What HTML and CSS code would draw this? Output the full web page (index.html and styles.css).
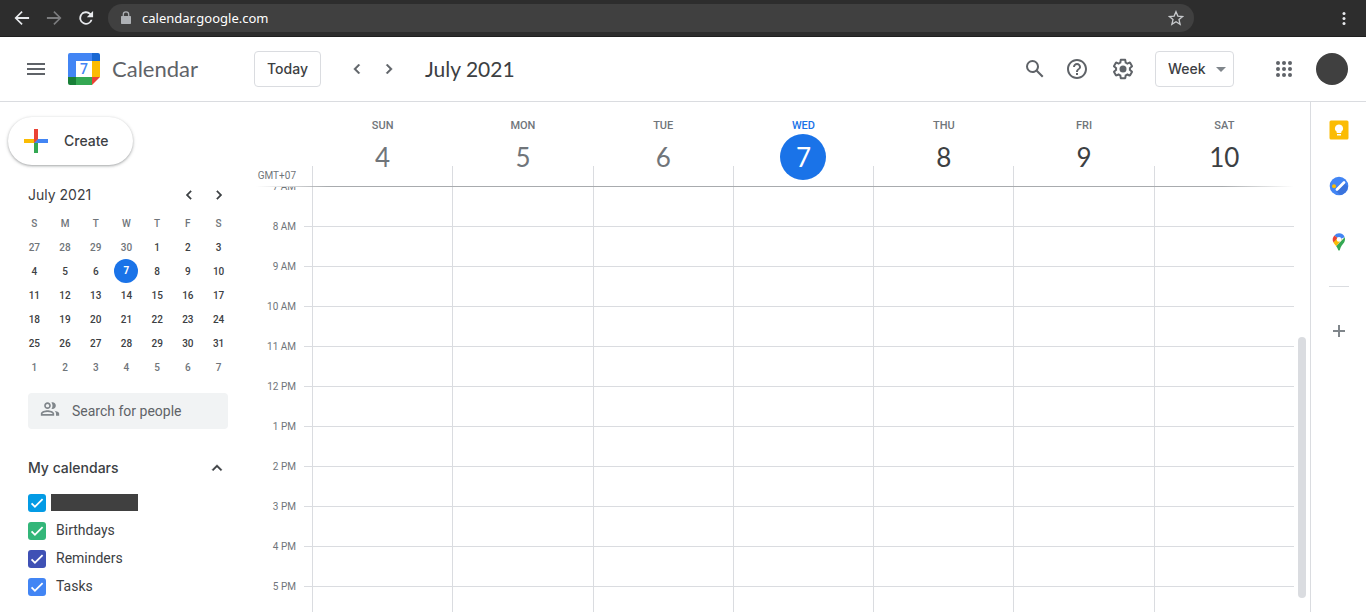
FILE: index.html
```html
<!DOCTYPE html>
<html lang="en">
<head>
<meta charset="utf-8">
<meta name="viewport" content="width=device-width, initial-scale=1">
<title>Calendar - July 2021</title>
<link rel="stylesheet" href="styles.css">
</head>
<body>
<div class="browser">
  <button class="browser-btn" aria-label="Back"><svg width="20" height="20" viewBox="0 0 24 24"><path d="M20.500 10.900H6.900l5.900-5.900L11.400 3.600 3 12l8.400 8.400 1.400-1.400-5.900-5.900h13.600z" fill="#e8eaed"/></svg></button>
  <button class="browser-btn" aria-label="Forward"><svg width="20" height="20" viewBox="0 0 24 24"><path d="M3.500 10.900h13.600l-5.900-5.900 1.400-1.400L21 12l-8.400 8.400-1.400-1.400 5.900-5.900H3.500z" fill="#7b7c7e"/></svg></button>
  <button class="browser-btn" aria-label="Reload"><svg width="20" height="20" viewBox="0 0 24 24"><path d="M17.650 6.350A8 8 0 1 0 19.730 14h-2.300A5.800 5.800 0 1 1 12 6.200c1.600 0 3 .7 4.100 1.700L13 11h7.500V3.500z" fill="#e8eaed"/></svg></button>
  <div class="address">
    <svg width="16" height="16" viewBox="0 0 24 24"><path d="M18 9h-1V7A5 5 0 0 0 7 7v2H6c-1.100 0-1.500.700-1.500 1.500v9c0 .800.400 1.500 1.500 1.500h12c1.100 0 1.500-.700 1.500-1.500v-9C19.500 9.700 19.100 9 18 9zM8.800 7a3.200 3.200 0 0 1 6.400 0v2H8.800z" fill="#aeb1b5"/></svg>
    <input class="address-input" aria-label="Address" value="calendar.google.com">
    <button class="browser-btn star" aria-label="Bookmark"><svg width="16" height="16" viewBox="0 0 24 24"><path d="M12 2.500l2.800 6.600 7.200.600-5.500 4.700 1.700 7L12 17.700l-6.200 3.700 1.700-7L2 9.700l7.200-.600z" fill="none" stroke="#c8cacd" stroke-width="2"/></svg></button>
  </div>
  <button class="browser-btn more" aria-label="Menu"><svg width="16" height="16" viewBox="0 0 16 16" fill="#e8eaed"><circle cx="8" cy="3.500" r="1.500"/><circle cx="8" cy="8.500" r="1.500"/><circle cx="8" cy="13.500" r="1.500"/></svg></button>
</div>

<header class="topbar">
  <button class="icon-btn menu" aria-label="Main menu"><svg width="24" height="24" viewBox="0 0 24 24"><path d="M3 18h18v-2H3zm0-5h18v-2H3zm0-7v2h18V6z" fill="#5f6368"/></svg></button>
  <div class="brand">
    <svg class="logo" width="32" height="32" viewBox="0 0 32 32">
      <path d="M2 0h22v8H8v16H0V2a2 2 0 0 1 2-2z" fill="#4285f4"/>
      <path d="M24 0h6a2 2 0 0 1 2 2v6h-8z" fill="#1967d2"/>
      <path d="M24 8h8v16h-8z" fill="#fbbc04"/>
      <path d="M8 24h16v8H8z" fill="#34a853"/>
      <path d="M0 24h8v8H2a2 2 0 0 1-2-2z" fill="#188038"/>
      <path d="M24 24h8l-8 8z" fill="#ea4335"/>
      <path d="M8 8h16v16H8z" fill="#fff"/>
      <text x="16" y="21" class="logo-day">7</text>
    </svg>
    <span class="brand-name">Calendar</span>
  </div>
  <button class="outline-btn">Today</button>
  <div class="pager">
    <button class="icon-btn" aria-label="Previous week"><svg width="20" height="20" viewBox="0 0 24 24"><path d="M15.410 7.410L14 6l-6 6 6 6 1.410-1.410L10.830 12z" fill="#5f6368" stroke="#5f6368" stroke-width=".5"/></svg></button>
    <button class="icon-btn" aria-label="Next week"><svg width="20" height="20" viewBox="0 0 24 24"><path d="M10 6L8.590 7.410 13.170 12l-4.580 4.590L10 18l6-6z" fill="#5f6368" stroke="#5f6368" stroke-width=".5"/></svg></button>
  </div>
  <h1 class="period">July 2021</h1>
  <div class="tools">
    <button class="icon-btn" aria-label="Search"><svg width="24" height="24" viewBox="0 0 24 24"><path d="M20.490 19l-5.730-5.730C15.530 12.200 16 10.910 16 9.500A6.500 6.500 0 1 0 9.500 16c1.410 0 2.700-.470 3.770-1.240L19 20.490 20.490 19zM5 9.500C5 7.010 7.010 5 9.500 5S14 7.010 14 9.500 11.990 14 9.500 14 5 11.990 5 9.500z" fill="#5f6368"/></svg></button>
    <button class="icon-btn" aria-label="Support"><svg width="24" height="24" viewBox="0 0 24 24"><path d="M11 18h2v-2h-2v2zm1-16C6.480 2 2 6.480 2 12s4.480 10 10 10 10-4.480 10-10S17.520 2 12 2zm0 18c-4.410 0-8-3.590-8-8s3.590-8 8-8 8 3.590 8 8-3.590 8-8 8zm0-14c-2.210 0-4 1.790-4 4h2c0-1.100.900-2 2-2s2 .900 2 2c0 2-3 1.750-3 5h2c0-2.250 3-2.500 3-5 0-2.210-1.790-4-4-4z" fill="#5f6368"/></svg></button>
    <button class="icon-btn" aria-label="Settings"><svg width="24" height="24" viewBox="0 0 24 24" fill="#5f6368"><path d="M13.850 22.250h-3.700c-.740 0-1.360-.540-1.450-1.270l-.270-1.890c-.270-.140-.530-.290-.790-.460l-1.800.720c-.700.260-1.470-.030-1.810-.650L2.200 15.530c-.350-.660-.200-1.440.360-1.880l1.530-1.190c-.010-.150-.020-.300-.020-.460 0-.150.010-.310.020-.460l-1.520-1.190c-.590-.450-.740-1.260-.370-1.880l1.850-3.190c.340-.620 1.110-.900 1.790-.630l1.810.730c.260-.170.520-.320.780-.460l.270-1.910c.090-.700.710-1.250 1.440-1.250h3.700c.740 0 1.360.540 1.450 1.270l.270 1.890c.270.140.530.290.790.460l1.800-.720c.710-.260 1.480.030 1.820.650l1.840 3.180c.360.660.200 1.440-.360 1.880l-1.520 1.190c.010.150.020.300.020.460s-.010.310-.020.460l1.520 1.190c.560.450.720 1.230.370 1.860l-1.860 3.220c-.340.620-1.110.900-1.800.630l-1.800-.720c-.260.170-.520.320-.780.460l-.270 1.910c-.100.680-.720 1.220-1.460 1.220zm-3.230-2h2.760l.370-2.550.530-.220c.440-.180.880-.440 1.340-.780l.450-.340 2.380.960 1.380-2.400-2.030-1.580.070-.560c.030-.260.060-.510.060-.780s-.030-.530-.060-.780l-.070-.560 2.030-1.580-1.390-2.400-2.390.960-.450-.350c-.420-.320-.870-.580-1.330-.770l-.520-.220-.370-2.550h-2.760l-.370 2.550-.530.210c-.440.190-.880.440-1.340.790l-.450.330-2.380-.950-1.390 2.390 2.030 1.580-.070.560a7 7 0 0 0-.060.790c0 .260.020.530.060.780l.070.560-2.030 1.580 1.380 2.400 2.390-.960.450.350c.430.330.860.580 1.330.770l.530.220z"/><circle cx="12" cy="12" r="3.500"/></svg></button>
    <div class="view-select">
      <select aria-label="View"><option>Day</option><option selected>Week</option><option>Month</option></select>
      <svg width="10" height="5" viewBox="0 0 10 5"><path d="M0 0h10L5 5z" fill="#80868b"/></svg>
    </div>
    <button class="icon-btn apps" aria-label="Apps"><svg width="24" height="24" viewBox="0 0 24 24" fill="#5f6368"><circle cx="6" cy="6" r="2"/><circle cx="12" cy="6" r="2"/><circle cx="18" cy="6" r="2"/><circle cx="6" cy="12" r="2"/><circle cx="12" cy="12" r="2"/><circle cx="18" cy="12" r="2"/><circle cx="6" cy="18" r="2"/><circle cx="12" cy="18" r="2"/><circle cx="18" cy="18" r="2"/></svg></button>
    <button class="avatar" aria-label="Account"></button>
  </div>
</header>

<div class="workspace">
  <aside class="sidebar">
    <button class="create"><svg width="24" height="24" viewBox="0 0 24 24"><path d="M10 0h4v10l-4 4z" fill="#ea4335"/><path d="M0 10h10v4H0z" fill="#fbbc04"/><path d="M10 14l4-4v14h-4z" fill="#34a853"/><path d="M14 10h10v4H10z" fill="#4285f4"/><path d="M10 10h4l-4 4z" fill="#ea4335"/></svg><span>Create</span></button>

    <div class="mini-head">
      <h2 class="section-title">July 2021</h2>
      <button class="icon-btn" aria-label="Previous month"><svg width="18" height="18" viewBox="0 0 24 24"><path d="M15.410 7.410L14 6l-6 6 6 6 1.410-1.410L10.830 12z" fill="#3c4043" stroke="#3c4043" stroke-width=".5"/></svg></button>
      <button class="icon-btn" aria-label="Next month"><svg width="18" height="18" viewBox="0 0 24 24"><path d="M10 6L8.590 7.410 13.170 12l-4.580 4.590L10 18l6-6z" fill="#3c4043" stroke="#3c4043" stroke-width=".5"/></svg></button>
    </div>
    <table class="mini">
      <thead><tr><th>S</th><th>M</th><th>T</th><th>W</th><th>T</th><th>F</th><th>S</th></tr></thead>
      <tbody>
        <tr><td class="out">27</td><td class="out">28</td><td class="out">29</td><td class="out">30</td><td>1</td><td>2</td><td>3</td></tr>
        <tr><td>4</td><td>5</td><td>6</td><td><span class="today">7</span></td><td>8</td><td>9</td><td>10</td></tr>
        <tr><td>11</td><td>12</td><td>13</td><td>14</td><td>15</td><td>16</td><td>17</td></tr>
        <tr><td>18</td><td>19</td><td>20</td><td>21</td><td>22</td><td>23</td><td>24</td></tr>
        <tr><td>25</td><td>26</td><td>27</td><td>28</td><td>29</td><td>30</td><td>31</td></tr>
        <tr><td class="out">1</td><td class="out">2</td><td class="out">3</td><td class="out">4</td><td class="out">5</td><td class="out">6</td><td class="out">7</td></tr>
      </tbody>
    </table>

    <label class="people">
      <svg width="20" height="20" viewBox="0 0 24 24" fill="#80868b"><path d="M9 12c2.210 0 4-1.790 4-4s-1.790-4-4-4-4 1.790-4 4 1.790 4 4 4zm0-6c1.100 0 2 .900 2 2s-.900 2-2 2-2-.900-2-2 .900-2 2-2zm0 7.500c-2.700 0-8 1.350-8 4V20h16v-2.500c0-2.650-5.300-4-8-4zM15 18H3v-.500c0-.700 3-2 6-2s6 1.300 6 2zM15 12c2.200 0 4-1.800 4-4s-1.800-4-4-4c-.500 0-.900.100-1.300.200.800 1.100 1.300 2.400 1.300 3.800s-.500 2.700-1.300 3.800c.400.100.800.200 1.300.200zM17.300 14c1.200.900 1.900 2 1.900 3.500V20H23v-2.500c0-1.900-2.900-3.100-5.700-3.500z"/></svg>
      <input type="search" placeholder="Search for people" aria-label="Search for people">
    </label>

    <div class="list-head">
      <h2 class="section-title">My calendars</h2>
      <button class="icon-btn" aria-label="Collapse"><svg width="20" height="20" viewBox="0 0 24 24"><path d="M12 8l-6 6 1.410 1.410L12 10.830l4.590 4.580L18 14z" fill="#3c4043" stroke="#3c4043" stroke-width=".5"/></svg></button>
    </div>
    <ul class="calendars">
      <li><label><input class="sky" type="checkbox" checked aria-label="Primary calendar"><span class="redacted"></span></label></li>
      <li><label><input class="green" type="checkbox" checked><span>Birthdays</span></label></li>
      <li><label><input class="indigo" type="checkbox" checked><span>Reminders</span></label></li>
      <li><label><input class="blue" type="checkbox" checked><span>Tasks</span></label></li>
    </ul>
  </aside>

  <main class="week">
    <div class="week-head">
      <div class="zone">GMT+07</div>
      <div class="day-heads">
        <div class="day past"><span class="dow">SUN</span><span class="num">4</span></div>
        <div class="day past"><span class="dow">MON</span><span class="num">5</span></div>
        <div class="day past"><span class="dow">TUE</span><span class="num">6</span></div>
        <div class="day current"><span class="dow">WED</span><span class="num">7</span></div>
        <div class="day"><span class="dow">THU</span><span class="num">8</span></div>
        <div class="day"><span class="dow">FRI</span><span class="num">9</span></div>
        <div class="day"><span class="dow">SAT</span><span class="num">10</span></div>
      </div>
    </div>
    <div class="week-body">
      <div class="hours">
        <span>7 AM</span><span>8 AM</span><span>9 AM</span><span>10 AM</span><span>11 AM</span><span>12 PM</span><span>1 PM</span><span>2 PM</span><span>3 PM</span><span>4 PM</span><span>5 PM</span>
      </div>
      <div class="grid">
        <div></div><div></div><div></div><div></div><div></div><div></div><div></div>
      </div>
      <div class="track"><div class="thumb"></div></div>
    </div>
  </main>

  <nav class="panel" aria-label="Side panel">
    <button aria-label="Keep"><svg width="20" height="20" viewBox="0 0 20 20"><rect x=".5" y=".5" width="19" height="19" rx="1.500" fill="#fbbc04"/><path d="M10 4.500a4 4 0 0 0-2.300 7.300V13h4.600v-1.200A4 4 0 0 0 10 4.500zM8 14h4v1.600H8z" fill="#fff"/></svg></button>
    <button aria-label="Tasks"><svg width="20" height="20" viewBox="0 0 20 20"><circle cx="10" cy="10" r="9.300" fill="#4285f4"/><path d="M15.500 7l3.500 3.500a9.300 9.300 0 0 1-8 8.500L7 15z" fill="#3a73dc"/><path d="M8 13.500L15 6.500" stroke="#fff" stroke-width="2.800" stroke-linecap="round"/><circle cx="5" cy="10.200" r="2" fill="#fbbc04"/></svg></button>
    <button aria-label="Maps"><svg width="20" height="20" viewBox="0 0 20 20"><path d="M10 1.300a6 6 0 0 1 5.700 4L10 7.500 5.400 3.500A6 6 0 0 1 10 1.300z" fill="#4285f4"/><path d="M5.400 3.500a6 6 0 0 0-.900 7L10 7z" fill="#ea4335"/><path d="M4.500 10.500c.8 1.600 1.800 2.400 2.700 3.700L13 7.500 9 5.500z" fill="#fbbc04"/><path d="M15.700 5.300c.6 1.900.3 3.600-.6 5.200-1.400 2.200-3.400 3.500-4.300 7.400-.200.900-1.400.9-1.600 0-.4-1.500-1.200-2.600-2-3.700z" fill="#34a853"/><circle cx="10" cy="7.400" r="2.300" fill="#fff"/></svg></button>
    <hr>
    <button aria-label="Get add-ons"><svg width="20" height="20" viewBox="0 0 20 20"><path d="M9 4h2v5h5v2h-5v5H9v-5H4V9h5z" fill="#80868b"/></svg></button>
  </nav>
</div>
</body>
</html>
```

FILE: styles.css
```css
* { box-sizing: border-box; }

body {
  margin: 0;
  height: 100vh;
  overflow: hidden;
  display: flex;
  flex-direction: column;
  background: #fff;
  color: #3c4043;
  font-family: Roboto, "Liberation Sans", sans-serif;
  font-size: 14px;
}

button, input, select { font: inherit; color: inherit; }
button { border: 0; padding: 0; background: none; }
svg { display: block; flex: none; }
h1, h2, ul { margin: 0; padding: 0; font-weight: 400; }

/* Browser bar */
.browser {
  flex: none;
  display: flex;
  align-items: center;
  height: 37px;
  padding-left: 12px;
  gap: 12px;
  background: #2d2d2d;
  border-bottom: 1px solid #1f1f1f;
}
.browser-btn { width: 20px; display: flex; justify-content: center; }
.address {
  flex: 1;
  display: flex;
  align-items: center;
  height: 28px;
  gap: 8px;
  padding: 0 10px;
  border-radius: 14px;
  background: #404040;
}
.address-input {
  flex: 1;
  min-width: 0;
  border: 0;
  padding: 0;
  background: none;
  outline: 0;
  color: #fff;
  font-family: "Noto Sans", sans-serif;
  font-size: 13px;
}
.star { width: 16px; }
.more { margin: 0 12px 0 128px; }

/* Top bar */
.topbar {
  flex: none;
  display: flex;
  align-items: center;
  height: 65px;
  padding: 0 18px 0 24px;
  border-bottom: 1px solid #dadce0;
}
.icon-btn { display: flex; align-items: center; justify-content: center; }
.brand {
  display: flex;
  align-items: center;
  gap: 12px;
  width: 186px;
  margin-left: 20px;
}
.logo-day {
  font-family: Roboto, sans-serif;
  font-size: 14px;
  font-weight: 500;
  text-anchor: middle;
  fill: #4285f4;
}
.brand-name {
  padding-bottom: 2px;
  font-family: Lato, sans-serif;
  font-size: 22px;
  color: #5f6368;
}
.outline-btn {
  height: 36px;
  padding: 0 12px 2px;
  border: 1px solid #dadce0;
  border-radius: 4px;
  font-family: Inter, sans-serif;
  font-weight: 500;
}
.pager { display: flex; gap: 12px; margin: 0 26px; }
.period { padding-bottom: 2px; font-family: Lato, sans-serif; font-size: 21px; }
.tools { display: flex; align-items: center; gap: 22px; margin-left: auto; }
.tools .icon-btn:first-child { margin-right: -4px; }
.view-select { position: relative; margin-left: -2px; }
.view-select select {
  appearance: none;
  display: block;
  width: 79px;
  height: 36px;
  padding: 0 12px 2px;
  border: 1px solid #dadce0;
  border-radius: 4px;
  background: #fff;
  font-family: Inter, sans-serif;
  font-weight: 500;
}
.view-select svg {
  position: absolute;
  right: 8px;
  top: 16px;
  pointer-events: none;
}
.apps { margin: 0 -2px 0 16px; }
.avatar { width: 32px; height: 32px; border-radius: 50%; background: #404040; }

/* Page body */
.workspace { flex: 1; min-height: 0; display: flex; }

.sidebar { flex: none; width: 248px; padding: 15px 14px 0 8px; }
.create {
  display: flex;
  align-items: center;
  gap: 16px;
  height: 48px;
  padding: 0 24px 0 16px;
  border-radius: 24px;
  background: #fff;
  box-shadow: 0 1px 2px rgba(60, 64, 67, .3), 0 1px 3px 1px rgba(60, 64, 67, .15);
  font-family: Inter, sans-serif;
  font-weight: 500;
}
.create span { padding-bottom: 2px; }
.section-title {
  flex: 1;
  font-family: Inter, sans-serif;
  font-size: 14px;
  line-height: 20px;
}
.mini-head {
  display: flex;
  align-items: center;
  gap: 12px;
  margin: 20px 0 7px;
  padding: 0 6px 0 20px;
}
.mini {
  width: 215px;
  margin-left: 11px;
  table-layout: fixed;
  border-collapse: collapse;
  font-size: 10px;
  font-weight: 500;
  text-align: center;
}
.mini th { height: 23px; padding: 0; font-weight: 500; color: #70757a; }
.mini td { height: 24px; padding: 0; }
.mini .out { color: #70757a; }
.mini .today {
  display: block;
  width: 24px;
  margin: 0 auto;
  border-radius: 50%;
  background: #1a73e8;
  color: #fff;
  font-weight: 700;
  line-height: 24px;
}
.people {
  display: flex;
  align-items: center;
  gap: 12px;
  height: 36px;
  width: 200px;
  margin: 14px 0 0 20px;
  padding: 0 12px;
  border-radius: 4px;
  background: #f1f3f4;
}
.people svg { margin-bottom: 4px; }
.people input { flex: 1; min-width: 0; border: 0; padding: 0; background: none; outline: 0; }
.people input::placeholder { color: #5f6368; opacity: 1; }
.list-head {
  display: flex;
  align-items: center;
  margin: 29px 0 11px;
  padding: 0 7px 0 20px;
}
.list-head .section-title { font-weight: 500; }
.calendars { list-style: none; padding-left: 20px; }
.calendars label { display: flex; align-items: center; gap: 10px; height: 28px; }
.calendars span { margin-bottom: 2px; }
.calendars input {
  appearance: none;
  position: relative;
  flex: none;
  width: 18px;
  height: 18px;
  margin: 0;
  border-radius: 3px;
}
.calendars input:checked::before {
  content: "";
  position: absolute;
  inset: 1px;
  background: #fff;
  clip-path: polygon(37% 66%, 20% 48%, 12% 56%, 37% 82%, 89% 30%, 81% 22%);
}
.sky { background: #039be5; }
.green { background: #33b679; }
.indigo { background: #3f51b5; }
.blue { background: #4285f4; }
.redacted { width: 87px; height: 17px; margin-left: -5px; background: #404040; }

/* Week view */
.week { flex: 1; min-width: 0; display: flex; flex-direction: column; }
.week-head { flex: none; display: flex; height: 85px; padding-right: 16px; }
.week-head, .week-body { position: relative; }
.week-head::after {
  content: "";
  position: absolute;
  left: 8px;
  right: 16px;
  bottom: 0;
  height: 1px;
  background: linear-gradient(to right, rgba(168, 171, 174, 0), #a8abae 72px, #a8abae calc(100% - 72px), rgba(168, 171, 174, 0));
}
.zone {
  width: 64px;
  padding: 0 16px 6px 0;
  align-self: flex-end;
  text-align: right;
  font-size: 10px;
  color: #70757a;
}
.day-heads { flex: 1; display: grid; grid-template-columns: repeat(7, 1fr); }
.day {
  display: flex;
  flex-direction: column;
  align-items: center;
  padding: 16px 0 0 1px;
  background: linear-gradient(#dadce0, #dadce0) left bottom / 1px 21px no-repeat;
}
.dow { font-size: 11px; font-weight: 500; line-height: 16px; color: #70757a; }
.num {
  width: 46px;
  border-radius: 50%;
  font-family: Lato, sans-serif;
  font-size: 26px;
  line-height: 46px;
  text-align: center;
}
.past .num { color: #70757a; }
.current .dow { color: #1a73e8; }
.current .num { background: #1a73e8; color: #fff; }

.week-body { flex: 1; min-height: 0; display: flex; overflow: hidden; }
.hours {
  width: 56px;
  margin-top: -20px;
  padding-right: 8px;
  font-size: 10px;
  line-height: 40px;
  text-align: right;
  color: #70757a;
}
.hours span { display: block; }
.grid {
  flex: 1;
  display: grid;
  grid-template-columns: repeat(7, 1fr);
  padding-left: 8px;
  background: repeating-linear-gradient(transparent 0 39px, #dadce0 39px 40px);
}
.grid div { border-left: 1px solid #dadce0; }
.track { width: 16px; display: flex; align-items: flex-end; justify-content: center; padding-bottom: 14px; }
.thumb { width: 8px; height: 63.5%; border-radius: 4px; background: #dadce0; }

/* Side panel */
.panel {
  flex: none;
  width: 56px;
  display: flex;
  flex-direction: column;
  align-items: center;
  border-left: 1px solid #dadce0;
}
.panel button { height: 56px; }
.panel hr { width: 20px; margin: 16px 0; border: 0; border-top: 1px solid #dadce0; }
```
